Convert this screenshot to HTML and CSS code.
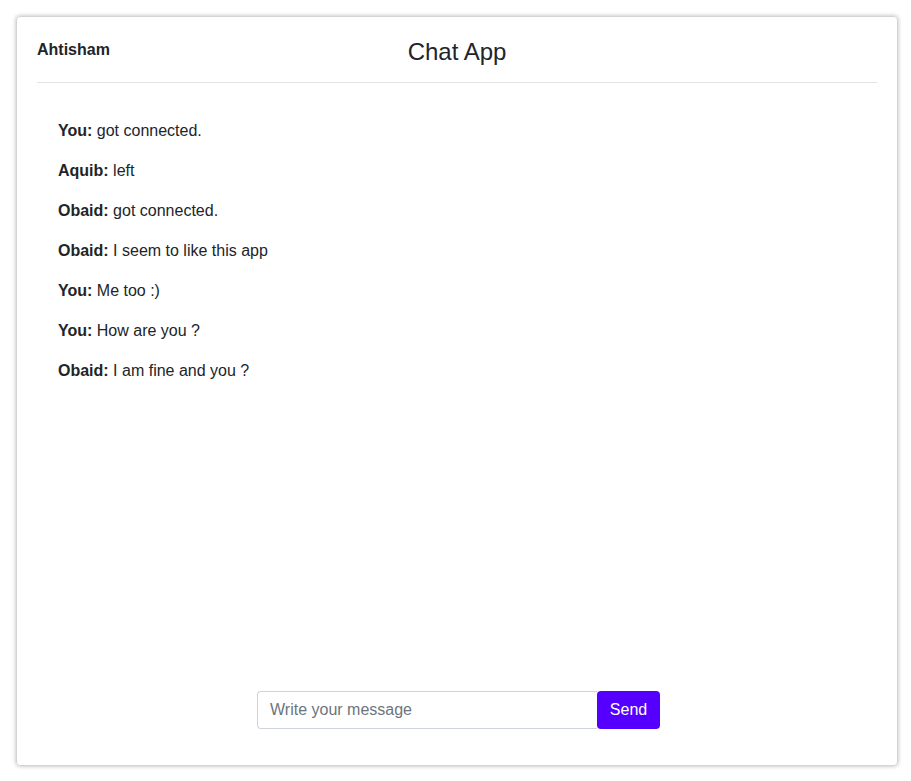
FILE: index.html
```html
<!DOCTYPE html>
<html lang="en">
<head>
<meta charset="utf-8">
<title>Chat App</title>
<link rel="stylesheet" href="styles.css">
</head>
<body>
<div class="card">
  <header class="header">
    <div class="user">Ahtisham</div>
    <h1 class="title">Chat App</h1>
    <div></div>
  </header>
  <main class="messages">
    <p class="msg"><strong>You:</strong> got connected.</p>
    <p class="msg"><strong>Aquib:</strong> left</p>
    <p class="msg"><strong>Obaid:</strong> got connected.</p>
    <p class="msg"><strong>Obaid:</strong> I seem to like this app</p>
    <p class="msg"><strong>You:</strong> Me too :)</p>
    <p class="msg"><strong>You:</strong> How are you ?</p>
    <p class="msg"><strong>Obaid:</strong> I am fine and you ?</p>
  </main>
  <form class="composer">
    <input class="input" type="text" placeholder="Write your message">
    <button class="send" type="button">Send</button>
  </form>
</div>
</body>
</html>
```
FILE: styles.css
```css
* { box-sizing: border-box; }
html, body { margin: 0; height: 100%; }
body {
  padding: 16px 13px 15px 16px;
  font-family: "Liberation Sans", Arial, sans-serif;
  font-size: 16px;
  line-height: 24px;
  color: #212529;
  background: #fff;
}
.card {
  height: 750px;
  border: 1px solid #d4d4d4;
  border-radius: 4px;
  box-shadow: 0 0 4px rgba(0,0,0,0.28);
  padding: 21px 20px 36px 20px;
  display: flex;
  flex-direction: column;
}
.header {
  display: grid;
  grid-template-columns: 1fr auto 1fr;
  align-items: start;
  border-bottom: 1px solid #e3e3e3;
  padding-bottom: 16px;
}
.user {
  font-weight: bold;
  line-height: 24px;
}
.title {
  margin: -1px 0 0 0;
  font-size: 24px;
  font-weight: 400;
  line-height: 29px;
}
.messages {
  flex: 1;
  padding: 36px 21px 0 21px;
}
.msg {
  margin: 0 0 16px 0;
}
.msg strong { font-weight: bold; }
.composer {
  display: flex;
  justify-content: center;
  margin: 0;
  padding-left: 3px;
}
.input {
  width: 340px;
  height: 38px;
  border: 1px solid #ced4da;
  border-right: none;
  border-radius: 4px 0 0 4px;
  padding: 6px 12px;
  font-family: inherit;
  font-size: 16px;
  color: #495057;
  outline: none;
}
.input::placeholder { color: #6c757d; }
.send {
  width: 63px;
  height: 38px;
  border: none;
  border-radius: 4px;
  background: #5500ff;
  color: #fff;
  font-family: inherit;
  font-size: 16px;
  padding: 0;
}
```
